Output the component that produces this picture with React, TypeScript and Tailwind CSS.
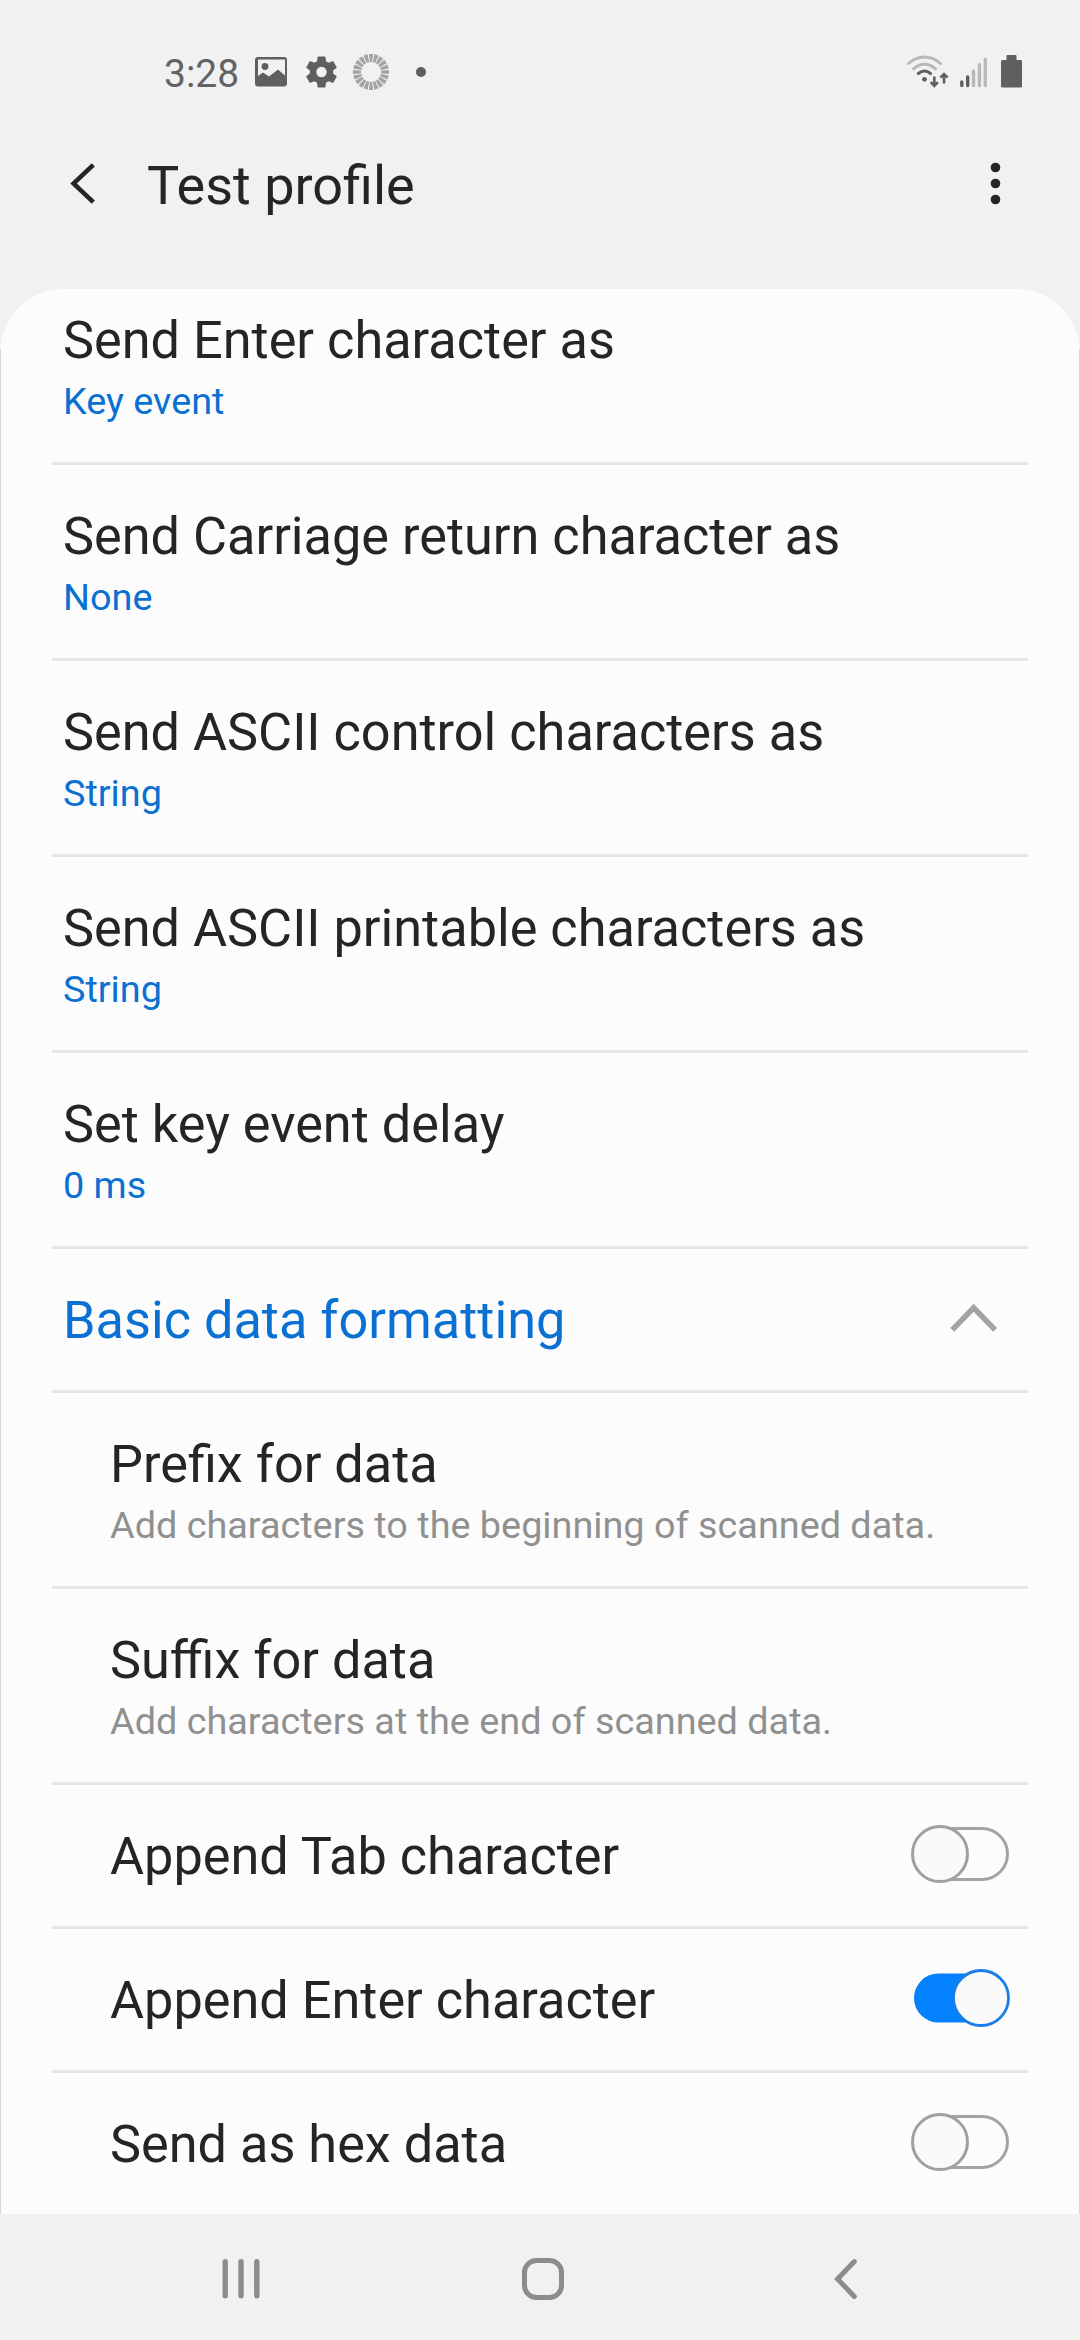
import { useState } from "react";

function StatusIcons() {
  return (
    <svg width="180" height="44" viewBox="250 50 180 44" className="shrink-0" fill="#5f5f5f">
      <path
        fillRule="evenodd"
        d="M258 57h26a3 3 0 0 1 3 3v23.500a3 3 0 0 1-3 3h-26a3 3 0 0 1-3-3V60a3 3 0 0 1 3-3zM258 59.500v16.500l5-3.500 6 4 9-7 7 6V59.500z"
      />
      <circle cx="265" cy="66.500" r="3.400" />
      <g transform="translate(302 52.500) scale(1.625)">
        <path d="M19.140 12.940c.04-.3.06-.61.06-.94s-.02-.64-.07-.94l2.030-1.580c.18-.14.23-.41.12-.61l-1.920-3.320c-.12-.22-.37-.29-.59-.22l-2.390.96c-.5-.38-1.030-.7-1.620-.94L14.400 2.810c-.04-.24-.24-.41-.48-.41h-3.840c-.24 0-.43.17-.47.41L9.250 5.350c-.59.24-1.130.57-1.620.94l-2.390-.96c-.22-.08-.47 0-.59.22L2.740 8.870c-.12.21-.08.47.12.61l2.030 1.580c-.05.3-.09.63-.09.94s.02.64.07.94l-2.030 1.580c-.18.14-.23.41-.12.61l1.920 3.320c.12.22.37.29.59.22l2.390-.96c.5.38 1.030.7 1.620.94l.36 2.540c.05.24.24.41.48.41h3.840c.24 0 .44-.17.47-.41l.36-2.540c.59-.24 1.130-.56 1.620-.94l2.390.96c.22.08.47 0 .59-.22l1.920-3.320c.12-.22.07-.47-.12-.61l-2.010-1.580zM12 15.200a3.200 3.200 0 1 1 0-6.400 3.200 3.200 0 0 1 0 6.400z" />
      </g>
      <circle
        cx="371"
        cy="72"
        r="14"
        fill="none"
        stroke="#a3a3a3"
        strokeWidth="8"
        pathLength="200"
        strokeDasharray="7.600 2.400"
        strokeDashoffset="3.800"
      />
      <circle cx="421" cy="72" r="5" />
    </svg>
  );
}

function ConnectivityIcons() {
  return (
    <svg width="124" height="44" viewBox="902 50 124 44" className="shrink-0" fill="#5f5f5f">
      <g fill="none" strokeWidth="3" strokeLinecap="round">
        <path d="M908.500 63.500C918 54.800 931 54.800 940.500 63.500" stroke="#b9b9b9" />
        <path d="M913.500 68.800C920 62.600 929 62.600 935.500 68.800" stroke="#b9b9b9" />
        <path d="M918.300 73.500C922.300 70.300 926.800 70.300 930.500 73.500" stroke="#5f5f5f" />
      </g>
      <circle cx="924.500" cy="79.300" r="2.400" />
      <path
        d="M934.300 76.500v9M930.700 82.200l3.600 3.600 3.600-3.600M944 83.500v-9M940.400 77.600l3.600-3.600 3.600 3.600"
        fill="none"
        stroke="#5f5f5f"
        strokeWidth="2.600"
      />
      <g strokeWidth="3.400" strokeLinecap="round">
        <path d="M961.800 82v3.500M967.700 77v8.500" stroke="#5f5f5f" />
        <path d="M973.500 71v14.500M979.400 64.700v20.800M985.300 59.500v26" stroke="#b9b9b9" />
      </g>
      <path d="M1007.500 55h8a1 1 0 0 1 1 1v4h4a1.500 1.500 0 0 1 1.500 1.500v24.500a1.500 1.500 0 0 1-1.500 1.500h-18a1.500 1.500 0 0 1-1.500-1.500V61.500a1.500 1.500 0 0 1 1.500-1.500h4v-4a1 1 0 0 1 1-1z" />
    </svg>
  );
}

function Toggle({ initial }: { initial: boolean }) {
  const [on, setOn] = useState(initial);
  return (
    <button
      type="button"
      role="switch"
      aria-checked={on}
      aria-label="Toggle setting"
      onClick={() => setOn(!on)}
      className="mr-[69px] h-[60px] w-[102px] shrink-0"
    >
      <svg width="102" height="60" viewBox="0 0 102 60">
        {on ? (
          <>
            <rect x="6" y="5.500" width="90" height="49" rx="24.500" fill="#0381fe" />
            <circle cx="73" cy="30" r="27.500" fill="#fafafa" stroke="#1a7ee6" strokeWidth="2.800" />
          </>
        ) : (
          <>
            <rect x="6" y="4.500" width="93.500" height="51" rx="25.500" fill="none" stroke="#a3a3a3" strokeWidth="3" />
            <circle cx="32" cy="30" r="27.500" fill="#fafafa" stroke="#a0a0a0" strokeWidth="3" />
          </>
        )}
      </svg>
    </button>
  );
}

type Setting = {
  title: string;
  detail?: string;
  nested?: boolean;
  toggle?: boolean;
};

const general: Setting[] = [
  { title: "Send Enter character as", detail: "Key event" },
  { title: "Send Carriage return character as", detail: "None" },
  { title: "Send ASCII control characters as", detail: "String" },
  { title: "Send ASCII printable characters as", detail: "String" },
  { title: "Set key event delay", detail: "0 ms" },
];

const formatting: Setting[] = [
  { title: "Prefix for data", detail: "Add characters to the beginning of scanned data.", nested: true },
  { title: "Suffix for data", detail: "Add characters at the end of scanned data.", nested: true },
  { title: "Append Tab character", nested: true, toggle: false },
  { title: "Append Enter character", nested: true, toggle: true },
  { title: "Send as hex data", nested: true, toggle: false },
];

function Divider() {
  return <div className="mx-[51px] h-[3px] bg-[#e6e6e6]" />;
}

function Row({ title, detail, nested, toggle }: Setting) {
  return (
    <div>
      <Divider />
      <div
        className={`flex justify-between ${detail ? "h-[193px]" : "h-[141px]"} ${nested ? "pl-[109px]" : "pl-[62px]"}`}
      >
        <div className="pt-[39px] whitespace-nowrap">
          <div className="text-[52.25px] leading-[66px] text-[#252525]">{title}</div>
          {detail && (
            <div
              className={`mt-px text-[37.8px] leading-[52px] ${nested ? "text-[#909090]" : "text-[#0a70d2]"}`}
            >
              {detail}
            </div>
          )}
        </div>
        {toggle !== undefined && (
          <div className="flex h-[138px] items-center">
            <Toggle initial={toggle} />
          </div>
        )}
      </div>
    </div>
  );
}

export default function App() {
  return (
    <div className="flex h-[2340px] w-[1080px] flex-col overflow-hidden bg-[#f1f1f1] font-['Roboto',sans-serif]">
      <div className="flex h-[144px] shrink-0 items-center justify-between pr-[54px] pl-[164px]">
        <div className="flex items-center">
          <span className="w-[86px] pt-[3px] text-[39px] leading-[44px] text-[#636363]">3:28</span>
          <StatusIcons />
        </div>
        <ConnectivityIcons />
      </div>

      <header className="flex h-[145px] shrink-0 items-start pr-[76px] pl-[63px]">
        <svg width="40" height="50" viewBox="63 158 40 50" className="mt-[14px]">
          <path d="M93.300 164.800L73.500 183.500 93.300 202.200" fill="none" stroke="#252525" strokeWidth="4.500" />
        </svg>
        <h1 className="ml-[44px] flex-1 pt-[6px] text-[54px] leading-[72px] text-[#252525]">Test profile</h1>
        <svg width="16" height="50" viewBox="988 158 16 50" className="mt-[14px]" fill="#252525">
          <circle cx="995.500" cy="167.500" r="4.800" />
          <circle cx="995.500" cy="183.500" r="4.800" />
          <circle cx="995.500" cy="199.500" r="4.800" />
        </svg>
      </header>

      <main className="relative h-[1925px] shrink-0 overflow-hidden rounded-t-[64px] bg-[#fcfcfc] px-px">
        <div className="absolute top-[60px] bottom-0 left-0 w-px bg-[#d6d6d6]" />
        <div className="absolute top-[60px] right-0 bottom-0 w-px bg-[#d6d6d6]" />
        <div className="mt-[-23px]">
          {general.map((s) => (
            <Row key={s.title} {...s} />
          ))}
          <Divider />
          <div className="flex h-[141px] justify-between pr-[80px] pl-[62px]">
            <div className="pt-[39px] text-[52.25px] leading-[66px] text-[#0a70d2]">Basic data formatting</div>
            <svg width="50" height="32" viewBox="950 1302 50 32" className="mt-[53px]">
              <path
                d="M953.300 1329.800L974.700 1307.800 996.100 1329.800"
                fill="none"
                stroke="#a3a3a3"
                strokeWidth="5.500"
              />
            </svg>
          </div>
          {formatting.map((s) => (
            <Row key={s.title} {...s} />
          ))}
        </div>
      </main>

      <nav className="flex h-[126px] shrink-0 items-center bg-[#f1f1f1] pl-[218px]">
        <svg width="46" height="46" viewBox="218 2256 46 46" className="mt-[4px]">
          <path
            d="M225.200 2261.800v34M241 2261.800v34M256.800 2261.800v34"
            fill="none"
            stroke="#8c8c8c"
            strokeWidth="5.400"
            strokeLinecap="round"
          />
        </svg>
        <svg width="46" height="46" viewBox="520 2256 46 46" className="mt-[4px] ml-[256px]">
          <rect x="524.500" y="2260.500" width="37" height="37" rx="12" fill="none" stroke="#8c8c8c" strokeWidth="5" />
        </svg>
        <svg width="30" height="46" viewBox="830 2256 30 46" className="mt-[4px] ml-[264px]">
          <path
            d="M854.300 2261.600L837.600 2279 854.300 2296.400"
            fill="none"
            stroke="#8c8c8c"
            strokeWidth="5"
            strokeLinecap="round"
          />
        </svg>
      </nav>
    </div>
  );
}
